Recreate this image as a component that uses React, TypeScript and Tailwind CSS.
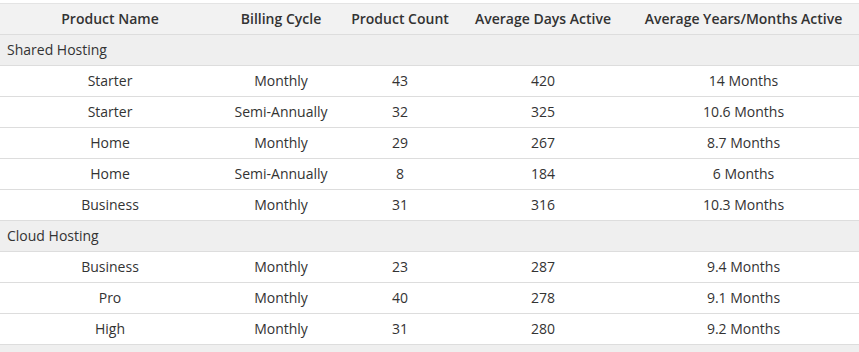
import React from "react";

type Row = { name: string; cycle: string; count: number; days: number; months: string };
type Group = { title: string; rows: Row[] };

const groups: Group[] = [
    {
        title: "Shared Hosting",
        rows: [
            { name: "Starter", cycle: "Monthly", count: 43, days: 420, months: "14 Months" },
            { name: "Starter", cycle: "Semi-Annually", count: 32, days: 325, months: "10.6 Months" },
            { name: "Home", cycle: "Monthly", count: 29, days: 267, months: "8.7 Months" },
            { name: "Home", cycle: "Semi-Annually", count: 8, days: 184, months: "6 Months" },
            { name: "Business", cycle: "Monthly", count: 31, days: 316, months: "10.3 Months" },
        ],
    },
    {
        title: "Cloud Hosting",
        rows: [
            { name: "Business", cycle: "Monthly", count: 23, days: 287, months: "9.4 Months" },
            { name: "Pro", cycle: "Monthly", count: 40, days: 278, months: "9.1 Months" },
            { name: "High", cycle: "Monthly", count: 31, days: 280, months: "9.2 Months" },
        ],
    },
    { title: "", rows: [] },
];

export default function App() {
    return (
        <div className="h-screen overflow-hidden bg-white pt-[3px] text-[#333] font-['Open_Sans',sans-serif] text-[14px]">
            <table className="w-[859px] table-fixed border-collapse border-t border-[#e4e4e4]">
                <colgroup>
                    <col className="w-[220px]" />
                    <col className="w-[122px]" />
                    <col className="w-[116px]" />
                    <col className="w-[170px]" />
                    <col className="w-[231px]" />
                </colgroup>
                <thead>
                    <tr className="bg-[#f2f2f2] border-b border-[#dddddd]">
                        {["Product Name", "Billing Cycle", "Product Count", "Average Days Active", "Average Years/Months Active"].map((h) => (
                            <th key={h} className="h-[31px] px-1 text-center font-semibold leading-5 whitespace-nowrap">
                                {h}
                            </th>
                        ))}
                    </tr>
                </thead>
                <tbody>
                    {groups.map((g, gi) => (
                        <React.Fragment key={gi}>
                            <tr className="bg-[#efefef] border-b border-[#dddddd]">
                                <td colSpan={5} className="h-[31px] px-[7px] leading-5">
                                    {g.title}
                                </td>
                            </tr>
                            {g.rows.map((r, i) => (
                                <tr key={i} className="bg-white border-b border-[#dddddd]">
                                    <td className="h-[31px] text-center leading-5">{r.name}</td>
                                    <td className="text-center leading-5">{r.cycle}</td>
                                    <td className="text-center leading-5">{r.count}</td>
                                    <td className="text-center leading-5">{r.days}</td>
                                    <td className="text-center leading-5">{r.months}</td>
                                </tr>
                            ))}
                        </React.Fragment>
                    ))}
                </tbody>
            </table>
        </div>
    );
}
